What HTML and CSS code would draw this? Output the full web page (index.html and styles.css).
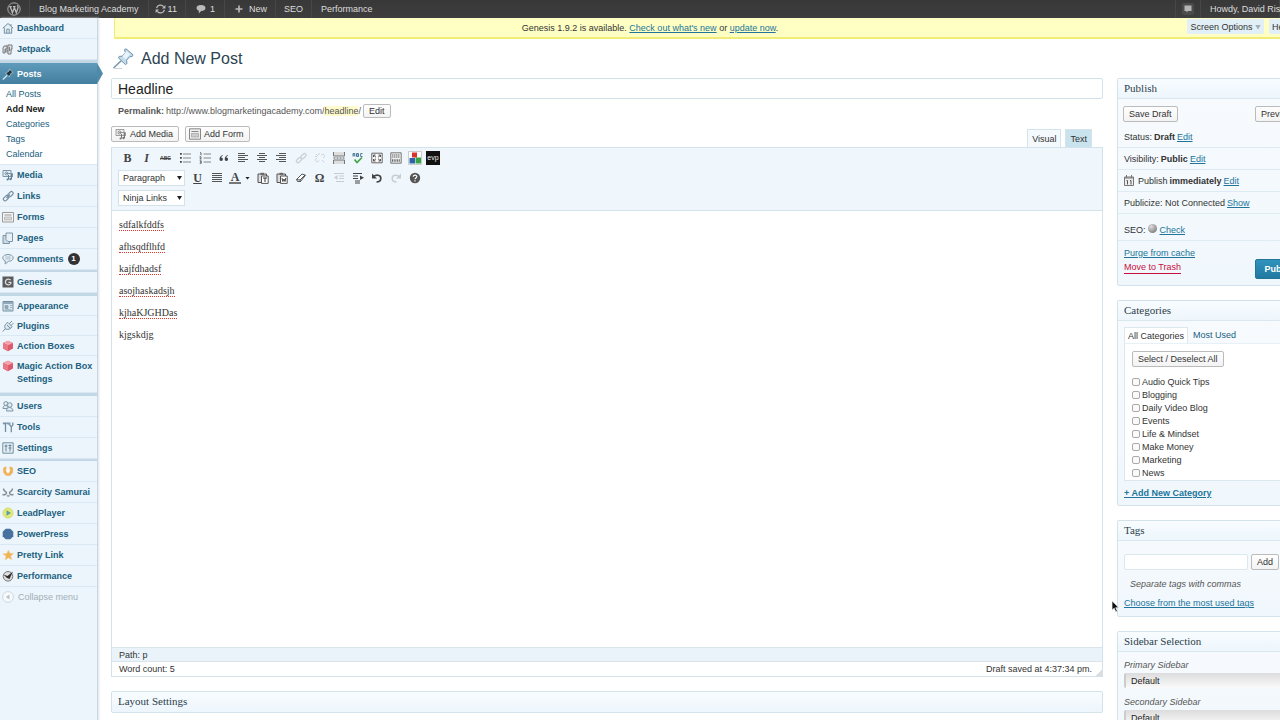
FILE: index.html
```html
<!DOCTYPE html>
<html lang="en">
<head>
<meta charset="utf-8">
<title>Add New Post - Blog Marketing Academy</title>
<link rel="stylesheet" href="styles.css">
</head>
<body>
<header class="adminbar">
  <nav class="adminbar-left" aria-label="Toolbar">
    <a class="ab-item ab-logo" href="#" aria-label="About WordPress"><svg width="14" height="14" viewBox="0 0 14 14"><circle cx="7" cy="7" r="6.2" fill="none" stroke="#aaa" stroke-width="1"/><path d="M2.2 4.6h2.6M3.2 4.6l2.2 6.2L7 6.4M6 4.6h2.6M7 4.6l2.3 6.2 1.8-5.2c.2-.9-.3-1.6-.9-2.3" fill="none" stroke="#bbb" stroke-width="1.3"/></svg></a>
    <a class="ab-item ab-site" href="#">Blog Marketing Academy</a>
    <a class="ab-item ab-updates" href="#"><svg width="11" height="10" viewBox="0 0 11 10"><path d="M1.6 4.2A3.9 3.9 0 0 1 8.6 2.7M9.4 5.8a3.9 3.9 0 0 1-7 1.5" fill="none" stroke="#bbb" stroke-width="1.3"/><path d="M10.4 1v3.4H7zM.6 9V5.600H4z" fill="#bbb"/></svg>11</a>
    <a class="ab-item ab-comments" href="#"><svg width="10" height="10" viewBox="0 0 10 10"><path d="M5 1c2.600 0 4.500 1.200 4.500 3S7.600 7 5.200 7L2.800 9.400V6.700C1.300 6.200.5 5.200.5 4 .5 2.200 2.400 1 5 1z" fill="#bbb"/></svg>1</a>
    <a class="ab-item ab-new" href="#"><svg width="8" height="8" viewBox="0 0 8 8"><path d="M4 .5v7M.5 4h7" stroke="#bbb" stroke-width="1.600"/></svg>New</a>
    <a class="ab-item ab-seo" href="#">SEO</a>
    <a class="ab-item ab-perf" href="#">Performance</a>
  </nav>
  <div class="adminbar-right">
    <a class="ab-item ab-note" href="#" aria-label="Notifications"><svg width="12" height="12" viewBox="0 0 12 12"><rect width="12" height="12" rx="2" fill="#4b4b4b"/><path d="M2.500 2.500h7v5.500H6L4.500 9.500V8h-2z" fill="#b5b5b5"/></svg></a>
    <a class="ab-item ab-user" href="#">Howdy, David Risley</a>
  </div>
</header>

<div class="shell">
  <nav class="menu" aria-label="Main menu">
    <ul class="menu-group">
      <li><a class="menu-item" href="#"><svg class="mi" viewBox="0 0 12 12"><path d="M.8 6.200 6 1.500l5.200 4.700M2.300 5.500v5.700h7.400V5.500M4.800 11V7.200h2.400V11M9 2v2" fill="#e6eef4" stroke="#7290a3"/></svg>Dashboard</a></li>
      <li><a class="menu-item" href="#"><svg class="mi" viewBox="0 0 12 12"><circle cx="6" cy="6" r="4.500" fill="#ccc"/><path d="M2 3h3v3H3v4H1V5zM6 2h4v4H9v5H6zM7.500 4v4M3 8h3" fill="#e2e2e2" stroke="#6d7378" stroke-width=".9"/></svg>Jetpack</a></li>
    </ul>
    <ul class="menu-group">
      <li><a class="menu-item current" href="#"><svg class="mi" viewBox="0 0 12 12"><path d="M7.500 1 11 4.500 9.500 5 7.800 7.500 7.500 9 3.500 5l1.300-.4L7 3z" fill="#22343f" stroke="#dbe9f2" stroke-width=".6"/><path d="M5 7.500.8 11.500" stroke="#dbe9f2" stroke-width="1.200"/></svg>Posts</a>
        <ul class="submenu">
          <li><a href="#">All Posts</a></li>
          <li><a href="#" class="here">Add New</a></li>
          <li><a href="#">Categories</a></li>
          <li><a href="#">Tags</a></li>
          <li><a href="#">Calendar</a></li>
        </ul></li>
      <li><a class="menu-item" href="#"><svg class="mi" viewBox="0 0 12 12"><path d="M1 1.500h8v6H1zM4 4.500h6.500V8" fill="#e4ecf2" stroke="#7b97a9"/><circle cx="4.500" cy="4.500" r="1.500" fill="none" stroke="#7b97a9"/><path d="M9.500 5v5M6.500 6v4.500" stroke="#5f7f94"/><circle cx="8.500" cy="10" r="1.200" fill="#5f7f94"/><circle cx="5.500" cy="10.500" r="1" fill="#5f7f94"/></svg>Media</a></li>
      <li><a class="menu-item" href="#"><svg class="mi" viewBox="0 0 12 12"><g fill="none" stroke="#7590a2" stroke-width="1.200"><rect x="5.500" y="2.500" width="6" height="3.400" rx="1.700" transform="rotate(-45 8.500 4.200)"/><rect x="1" y="6.500" width="6" height="3.400" rx="1.700" transform="rotate(-45 4 8.200)"/><path d="M4.500 8 8 4.500"/></g></svg>Links</a></li>
      <li><a class="menu-item" href="#"><svg class="mi" viewBox="0 0 12 12"><path d="M.5 1.500h11v9.500H.5z" fill="#f4f4f4" stroke="#9b9b9b"/><path d="M2.500 4h7" stroke="#999"/><path d="M2.500 6h7v3h-7z" fill="#d5d5d5" stroke="#aaa" stroke-width=".6"/></svg>Forms</a></li>
      <li><a class="menu-item" href="#"><svg class="mi" viewBox="0 0 12 12"><path d="M1 3.500h6.500v8H1z" fill="#c9d8e3" stroke="#7b97a9"/><path d="M4 1h6.500v8.500H6L4 7.500z" fill="#e8f0f6" stroke="#7b97a9"/></svg>Pages</a></li>
      <li><a class="menu-item" href="#"><svg class="mi" viewBox="0 0 12 12"><path d="M6 1.500c3 0 5.200 1.400 5.200 3.400S9 8.300 6.500 8.300L3.200 11V7.800C1.600 7.200.8 6.200.8 4.900c0-2 2.200-3.400 5.200-3.400z" fill="#e4edf3" stroke="#7b97a9"/><path d="M3.500 4h5M3.500 5.800h5" stroke="#9db3c1" stroke-width=".8"/></svg>Comments <span class="count">1</span></a></li>
    </ul>
    <ul class="menu-group thin">
      <li><a class="menu-item" href="#"><svg class="mi" viewBox="0 0 12 12"><path d="M.5.500h11v11H.5z" fill="#5b5b5b"/><path d="M8.600 4.200A2.900 2.900 0 1 0 8.800 7.500V6.300H6.400" fill="none" stroke="#ddd" stroke-width="1.300"/></svg>Genesis</a></li>
    </ul>
    <ul class="menu-group dense">
      <li><a class="menu-item" href="#"><svg class="mi" viewBox="0 0 12 12"><path d="M1 1.500h10v9.500H1z" fill="#dbe6ee" stroke="#718fa3"/><path d="M1.500 3h9" stroke="#718fa3" stroke-width="1.400"/><path d="M3 5.500h3v3H3zM8 5.500h2M8 7.500h2M3 9.700h6" fill="#8ba6b7" stroke="#8ba6b7" stroke-width=".8"/></svg>Appearance</a></li>
      <li><a class="menu-item" href="#"><svg class="mi" viewBox="0 0 12 12"><path d="M3 8.500C2 5.500 4 3 6 2.500l4 4C9 9 6 10 3.500 9M7.500 3.500 10 1M9 5.500 11.500 3M3.500 8.500.8 11.500M5 5l3 3" fill="#dfe8ee" stroke="#718fa3"/></svg>Plugins</a></li>
      <li><a class="menu-item" href="#"><svg class="mi" viewBox="0 0 12 12"><path d="m6 .8 5 2.200v5.500L6 11.200 1 8.500V3z" fill="#dd5a6d"/><path d="M6 .8 11 3 6 5.300 1 3z" fill="#f3a4ae"/><path d="M6 5.300v5.900L1 8.500V3z" fill="#e77886"/></svg>Action Boxes</a></li>
      <li><a class="menu-item tall" href="#"><svg class="mi" viewBox="0 0 12 12"><path d="m6 .8 5 2.200v5.500L6 11.200 1 8.500V3z" fill="#dd5a6d"/><path d="M6 .8 11 3 6 5.300 1 3z" fill="#f3a4ae"/><path d="M6 5.300v5.900L1 8.500V3z" fill="#e77886"/></svg><span>Magic Action Box Settings</span></a></li>
    </ul>
    <ul class="menu-group">
      <li><a class="menu-item" href="#"><svg class="mi" viewBox="0 0 12 12"><g fill="#e2ebf1" stroke="#7b97a9"><path d="M1 8.500c0-2 1-3 2.500-3S6 6.500 6 8.500z"/><circle cx="3.800" cy="3.500" r="2"/><path d="M4.500 11c0-2.500 1.200-3.500 3-3.500s3.500 1 3.500 3.500z"/><circle cx="7.800" cy="5" r="2.300"/></g></svg>Users</a></li>
      <li><a class="menu-item" href="#"><svg class="mi" viewBox="0 0 12 12"><path d="M.8 2.200h5.400v1.500M3.500 2.500v8.500M2 2v1.500M9.300 11.200V6M7.800 1.500v2.800l1.500 1.400 1.500-1.400V1.500" fill="none" stroke="#718fa3" stroke-width="1.300"/></svg>Tools</a></li>
      <li><a class="menu-item" href="#"><svg class="mi" viewBox="0 0 12 12"><path d="M.8.800h10.400v10.400H.8z" fill="#e8eff4" stroke="#718fa3"/><path d="M4 2.500v7M8 2.500v7M2.500 4h3M6.500 3.500h3M6.500 6h3" stroke="#64859a"/></svg>Settings</a></li>
    </ul>
    <ul class="menu-group thin">
      <li><a class="menu-item" href="#"><svg class="mi" viewBox="0 0 12 12"><path d="M5 3.500 3.500 1.200 1.200 3v4.500L4 10.800h4.200L11 7.500V3L8.500 1.200 7 3.500v2L6 7 5 5.500z" fill="#f0b45c"/><path d="M4.800 3.800v2L6 7.500l1.200-1.700v-2" fill="none" stroke="#fff" stroke-width="1.300"/></svg>SEO</a></li>
      <li><a class="menu-item" href="#"><svg class="mi" viewBox="0 0 12 12"><path d="M1.500 2.500c0 3 3 2.500 3 4.500 0 1.500-2 2-4 1.500M10.500 2.500c0 3-3 2.500-3 4.500 0 1.500 2 2 4 1.500M5 9.500c1 .8 1.500.8 2.500 0" fill="none" stroke="#868d94" stroke-width="1.500"/></svg>Scarcity Samurai</a></li>
      <li><a class="menu-item" href="#"><svg class="mi" viewBox="0 0 12 12"><circle cx="6" cy="6" r="5" fill="#e3ea74" stroke="#d4dc70"/><path d="M4.500 3.300 9 6 4.500 8.700z" fill="#5a9bb0"/></svg>LeadPlayer</a></li>
      <li><a class="menu-item" href="#"><svg class="mi" viewBox="0 0 12 12"><path d="M3.700.7h4.600l3 3v4.600l-3 3H3.700l-3-3V3.700z" fill="#47729f"/></svg>PowerPress</a></li>
      <li><a class="menu-item" href="#"><svg class="mi" viewBox="0 0 12 12"><path d="m6.500 1 1.300 3.200 3.700.3-2.800 2.400 1.100 3.900-3.300-2L3 11l1-3.900L.8 5l4-.6z" fill="#efb353" stroke="#f4cf8f" stroke-width=".6"/></svg>Pretty Link</a></li>
      <li><a class="menu-item" href="#"><svg class="mi" viewBox="0 0 12 12"><circle cx="6" cy="6.300" r="4.800" fill="#dedede" stroke="#777"/><path d="M1.500 4.500 5.500 6 11 1.500 7.500 9 5 8z" fill="#2f2f2f"/></svg>Performance</a></li>
      <li><button class="collapse" type="button"><svg class="mi" viewBox="0 0 12 12"><circle cx="6" cy="6" r="5.400" fill="#f7fafc" stroke="#cdd8df"/><path d="M7.500 3.500v5L3.800 6z" fill="#b7c2ca"/></svg>Collapse menu</button></li>
    </ul>
  </nav>

  <div class="content">
    <div class="topstrip">
      <p class="notice">Genesis 1.9.2 is available. <a href="#">Check out what's new</a> or <a href="#">update now</a>.</p>
      <div class="screen-links">
        <button type="button">Screen Options <i class="tri"></i></button>
        <button type="button">Help <i class="tri"></i></button>
      </div>
    </div>

    <h1 class="page-title"><svg width="23" height="23" viewBox="0 0 23 23"><path d="M12.500 2.500 14 1.800l7 6-.8 1.700-2.400.2-3.200 3.500.4 3.300-1.600 1L6.500 11l.7-1.600 3.200-.2 3-3.600z" fill="#c3dcec" stroke="#6f94ac"/><path d="m14.500 4-4 5.500 3 2.800 4.500-5z" fill="#eaf4fa"/><path d="M9.200 13.800 1.500 21" stroke="#7696ab" stroke-width="1.500"/><path d="M2 21.500h8" stroke="#c9d3d9"/></svg>Add New Post</h1>

    <div class="columns">
      <main class="primary">
        <input class="title-input" type="text" value="Headline" aria-label="Post title">
        <div class="permalink"><strong>Permalink:</strong> <span>http://www.blogmarketingacademy.com/<mark>headline</mark>/</span> <button class="btn" type="button">Edit</button></div>

        <div class="editor-top">
          <button class="btn media-btn" type="button"><svg width="12" height="12" viewBox="0 0 12 12"><path d="M1 1.500h8v6H1zM4 4.500h6.500V8" fill="#eee" stroke="#888" stroke-width=".8"/><circle cx="4.500" cy="4.500" r="1.500" fill="none" stroke="#888"/><path d="M9.500 5v5M6.500 6v4.500" stroke="#777"/><circle cx="8.500" cy="10" r="1.200" fill="#777"/><circle cx="5.500" cy="10.500" r="1" fill="#777"/></svg>Add Media</button>
          <button class="btn media-btn" type="button"><svg width="12" height="12" viewBox="0 0 12 12"><path d="M.5.800h11v10.400H.5z" fill="#eee" stroke="#888"/><path d="M2.500 3.500h7" stroke="#888"/><path d="M2.500 5.500h7v3.500h-7z" fill="#ccc" stroke="#999" stroke-width=".6"/></svg>Add Form</button>
          <div class="editor-tabs"><button class="etab on" type="button">Visual</button><button class="etab" type="button">Text</button></div>
        </div>

        <section class="editor" aria-label="Editor">
          <div class="toolbar">
            <div class="trow icons">
              <div class="tgroup">
                <button type="button" class="tb glyph" aria-label="Bold"><b>B</b></button>
                <button type="button" class="tb glyph" aria-label="Italic"><b><em>I</em></b></button>
                <button type="button" class="tb abc" aria-label="Strikethrough"><s>ABC</s></button>
                <button type="button" class="tb" aria-label="Bulleted list"><svg viewBox="0 0 12 12"><path d="M4 2h8M4 6h8M4 10h8" stroke="#888"/><path d="M1 1h1.800v1.800H1zM1 5h1.800v1.800H1zM1 9h1.800v1.800H1z" fill="#444"/></svg></button>
              </div>
              <div class="tgroup">
                <button type="button" class="tb" aria-label="Numbered list"><svg viewBox="0 0 12 12"><path d="M4.500 2H12M4.500 6H12M4.500 10H12" stroke="#888"/><path d="M1 .8h1v2.500M.5 4.800h1.500v1L.8 7H2.500M.7 8.800h1.500v2.500H.7M1 10h1" stroke="#444" fill="none" stroke-width=".8"/></svg></button>
                <button type="button" class="tb" aria-label="Blockquote"><svg viewBox="0 0 12 12"><path d="M4.800 3C3 3.500 1.500 5 1.500 7.200a1.700 1.700 0 1 0 1.700-1.600C3.300 4.800 4 4 5 3.600zM10 3C8.200 3.500 6.700 5 6.700 7.200a1.700 1.700 0 1 0 1.700-1.600c.1-.8.8-1.600 1.800-2z" fill="#444"/></svg></button>
                <button type="button" class="tb" aria-label="Align left"><svg viewBox="0 0 12 12"><path d="M1 1.500h7M1 3.500h10M1 5.500h7M1 7.500h10M1 9.500h7" stroke="#555"/></svg></button>
                <button type="button" class="tb" aria-label="Align center"><svg viewBox="0 0 12 12"><path d="M3 1.500h6M1 3.500h10M3 5.500h6M1 7.500h10M3 9.500h6" stroke="#555"/></svg></button>
                <button type="button" class="tb" aria-label="Align right"><svg viewBox="0 0 12 12"><path d="M4 1.500h7M1 3.500h10M4 5.500h7M1 7.500h10M4 9.500h7" stroke="#555"/></svg></button>
              </div>
              <div class="tgroup">
                <button type="button" class="tb off" aria-label="Link"><svg viewBox="0 0 12 12"><g fill="none" stroke="#666" stroke-width="1.200"><rect x="5.500" y="2.500" width="6" height="3.200" rx="1.600" transform="rotate(-45 8.500 4.100)"/><rect x="1" y="6.500" width="6" height="3.200" rx="1.600" transform="rotate(-45 4 8.100)"/></g></svg></button>
                <button type="button" class="tb off" aria-label="Unlink"><svg viewBox="0 0 12 12"><path d="M7 3.500C8 1.500 11 2 10.500 4.500L9 6M5 8.500C4 10.500 1 10 1.500 7.500L3 6M2 2l2 2M8 8l2.500 2.500M5 1v2M1 4.500h2" fill="none" stroke="#666"/></svg></button>
                <button type="button" class="tb" aria-label="Insert More tag"><svg viewBox="0 0 12 12"><path d="M.5 0v4h11V0M.5 12V8h11v4" fill="#ddd" stroke="#777"/><path d="M.5 6H12" stroke="#555" stroke-dasharray="2 1"/></svg></button>
                <button type="button" class="tb" aria-label="Spellcheck"><svg viewBox="0 0 12 12"><path d="M1 4.500v-3h1.800v3M1 3h1.800M4.500 1.500v3h2v-3zM4.500 3h2M10.500 1.500H8.700v3h1.800" fill="none" stroke="#3f7192" stroke-width=".9"/><path d="M2.500 7.500 5 10.500l5-5" fill="none" stroke="#43a548" stroke-width="1.700"/></svg></button>
                <button type="button" class="tb" aria-label="Fullscreen"><svg viewBox="0 0 12 12"><path d="M.8 1.200h10.400v9.600H.8z" fill="#fafafa" stroke="#666"/><path d="M2.500 5V3h2M7.500 3h2v2M9.500 7v2h-2M4.500 9h-2V7M3 3.500l2 1.800M9 3.500 7 5.300M3 8.500l2-1.800M9 8.500 7 6.700" fill="none" stroke="#555"/></svg></button>
                <button type="button" class="tb" aria-label="Kitchen sink"><svg viewBox="0 0 12 12"><path d="M.8.800h10.400v10.400H.8z" fill="#eee" stroke="#777"/><path d="M2 3h8M2 5h8" stroke="#666" stroke-dasharray="1.500 .5"/><path d="M2 8.500h8" stroke="#666" stroke-width="2.500" stroke-dasharray="1 .7"/></svg></button>
                <button type="button" class="tb" aria-label="Insert blocks"><svg class="wide" viewBox="0 0 14 14"><path d="M.5.500h13v13H.5z" fill="#fff" stroke="#ccc"/><path d="M4 1.500h5v5H4z" fill="#d8342c"/><path d="M1.500 7H7v5.500H1.500z" fill="#2d63ad"/><path d="M7.500 6.500H13v6H7.500z" fill="#37a246"/></svg></button>
                <button type="button" class="tb evp" aria-label="Insert video">evp</button>
              </div>
            </div>
            <div class="trow">
              <label class="mce-select"><select aria-label="Format"><option>Paragraph</option></select></label>
              <div class="tgroup">
                <button type="button" class="tb glyph" aria-label="Underline"><b><u>U</u></b></button>
                <button type="button" class="tb" aria-label="Justify"><svg viewBox="0 0 12 12"><path d="M1 1.500h10M1 3.500h10M1 5.500h10M1 7.500h10M1 9.500h10" stroke="#555"/></svg></button>
                <button type="button" class="tb color" aria-label="Text color"><span class="glyph">A</span><i class="tri dark"></i></button>
                <button type="button" class="tb" aria-label="Paste as text"><svg viewBox="0 0 12 12"><path d="M1 2h8.500v8.500H1z" fill="#ddd" stroke="#555"/><path d="M3.500.800h3.500v2H3.500z" fill="#666"/><path d="M4.500 4h6.700v7.400H4.500z" fill="#fff" stroke="#555"/><path d="M6 6h4M8 6v4" stroke="#333"/></svg></button>
                <button type="button" class="tb" aria-label="Paste from Word"><svg viewBox="0 0 12 12"><path d="M1 2h8.500v8.500H1z" fill="#ddd" stroke="#555"/><path d="M3.500.800h3.500v2H3.500z" fill="#666"/><path d="M4.500 4h6.700v7.400H4.500z" fill="#fff" stroke="#555"/><path d="m6 6 .8 3.500L8 7l1 2.500L9.800 6" stroke="#333" fill="none" stroke-width=".9"/></svg></button>
                <button type="button" class="tb" aria-label="Remove formatting"><svg viewBox="0 0 12 12"><path d="M1.500 7.500 7 2l3.500 1.200L5.500 9.500H2.500z" fill="#fff" stroke="#555"/><path d="M1.500 7.500 5 8l.5 1.800M5 8l5-5" fill="none" stroke="#555"/></svg></button>
                <button type="button" class="tb glyph" aria-label="Special character"><b>Ω</b></button>
                <button type="button" class="tb off" aria-label="Outdent"><svg viewBox="0 0 12 12"><path d="M1 1.500h10M6 4h5M6 6.500h5M3 9.500h8" stroke="#555"/><path d="M4.500 3v5L1 5.500z" fill="#555"/></svg></button>
                <button type="button" class="tb" aria-label="Indent"><svg viewBox="0 0 12 12"><path d="M1 1.500h9M1 4h5M1 6.500h5M3 9h5M3 11h5" stroke="#444" stroke-width="1.200"/><path d="M8 3.500v4.500l4-2.200z" fill="#444"/></svg></button>
                <button type="button" class="tb" aria-label="Undo"><svg viewBox="0 0 12 12"><path d="M2.500 4.500C5 2.500 10 2.500 9.800 6.500 9.700 8.500 8 10 5.500 10" fill="none" stroke="#444" stroke-width="1.700"/><path d="M1 1.500v5h5z" fill="#444"/></svg></button>
                <button type="button" class="tb off" aria-label="Redo"><svg viewBox="0 0 12 12"><path d="M9.500 4.500C7 2.500 2 2.500 2.200 6.500 2.300 8.500 4 10 6.500 10" fill="none" stroke="#555" stroke-width="1.500"/><path d="M11 1.500v5H6z" fill="#555"/></svg></button>
                <button type="button" class="tb" aria-label="Help"><svg viewBox="0 0 12 12"><circle cx="6" cy="6" r="5.200" fill="#555"/><path d="M4.300 4.800C4.300 2.500 8 2.800 7.800 4.800 7.700 6 6 6 6 7.300M6 8.300v1.300" fill="none" stroke="#fff" stroke-width="1.200"/></svg></button>
              </div>
            </div>
            <div class="trow">
              <label class="mce-select"><select aria-label="Ninja Links"><option>Ninja Links</option></select></label>
            </div>
          </div>
          <div class="edit-area" role="textbox" aria-label="Post content" contenteditable="true" spellcheck="false">
            <p><span class="miss">sdfalkfddfs</span></p>
            <p><span class="miss">afhsqdflhfd</span></p>
            <p><span class="miss">kajfdhadsf</span></p>
            <p><span class="miss">asojhaskadsjh</span></p>
            <p><span class="miss">kjhaKJGHDas</span></p>
            <p>kjgskdjg</p>
          </div>
          <div class="path">Path: p</div>
          <div class="status"><span>Word count: 5</span><span>Draft saved at 4:37:34 pm.</span></div>
        </section>

        <section class="box"><h2>Layout Settings</h2></section>
      </main>

      <aside class="side">
        <section class="box">
          <h2>Publish</h2>
          <div class="pub-actions"><button class="btn" type="button">Save Draft</button><button class="btn" type="button">Preview</button></div>
          <div class="pub-row first">Status: <b>Draft</b> <a href="#">Edit</a></div>
          <div class="pub-row">Visibility: <b>Public</b> <a href="#">Edit</a></div>
          <div class="pub-row"><svg width="10" height="11" viewBox="0 0 10 11"><path d="M.5 2h9v8.500h-9z" fill="#eee" stroke="#777"/><path d="M.5 3h9M2.500 0v3M7.500 0v3" stroke="#777"/><path d="M2.500 5.500h1v4M6 5.500h1v4" fill="none" stroke="#555"/></svg> Publish <b>immediately</b> <a href="#">Edit</a></div>
          <div class="pub-row">Publicize: Not Connected <a href="#">Show</a></div>
          <div class="pub-row seo-row">SEO: <i class="ball"></i> <a href="#">Check</a></div>
          <div class="pub-foot">
            <div><a href="#">Purge from cache</a><a class="trash" href="#">Move to Trash</a></div>
            <button class="btn primary-btn" type="button">Publish</button>
          </div>
        </section>

        <section class="box">
          <h2>Categories</h2>
          <div class="cat-body">
            <div class="cat-tabs"><button class="on" type="button">All Categories</button><button type="button">Most Used</button></div>
            <div class="cat-panel">
              <button class="btn" type="button">Select / Deselect All</button>
              <div class="cat-list">
                <label><input type="checkbox">Audio Quick Tips</label>
                <label><input type="checkbox">Blogging</label>
                <label><input type="checkbox">Daily Video Blog</label>
                <label><input type="checkbox">Events</label>
                <label><input type="checkbox">Life &amp; Mindset</label>
                <label><input type="checkbox">Make Money</label>
                <label><input type="checkbox">Marketing</label>
                <label><input type="checkbox">News</label>
              </div>
            </div>
            <a class="add-cat" href="#">+ Add New Category</a>
          </div>
        </section>

        <section class="box">
          <h2>Tags</h2>
          <div class="tag-body">
            <div class="tag-row"><input type="text" aria-label="Add tags"><button class="btn" type="button">Add</button></div>
            <p class="hint">Separate tags with commas</p>
            <a href="#">Choose from the most used tags</a>
          </div>
        </section>

        <section class="box">
          <h2>Sidebar Selection</h2>
          <div class="sel-body">
            <label for="side-a">Primary Sidebar</label>
            <select id="side-a"><option>Default</option></select>
            <label for="side-b">Secondary Sidebar</label>
            <select id="side-b"><option>Default</option></select>
          </div>
        </section>
      </aside>
    </div>
  </div>
</div>
<svg class="cursor" width="9" height="13" viewBox="0 0 9 13"><path d="M1 .8v9.400l2.200-2 1.600 3.700 1.600-.7-1.600-3.500h3z" fill="#111" stroke="#fff" stroke-width=".7"/></svg>
</body>
</html>
```
FILE: styles.css
```css
* { box-sizing: border-box; }
html { overflow-x: hidden; scrollbar-width: none; }
body {
  margin: 0;
  overflow-x: clip;
  font: 9px/12px "Liberation Sans", Arial, sans-serif;
  color: #333;
  background: #fff;
}
ul, p, h1, h2 { margin: 0; padding: 0; list-style: none; }
a { color: #21759b; }
button, input, select { font: inherit; color: inherit; margin: 0; }
button { cursor: pointer; }
svg { display: block; flex: none; }

/* Top bar */
.adminbar {
  display: flex;
  justify-content: space-between;
  height: 18px;
  background: linear-gradient(#383838, #3e3e3e);
  overflow: hidden;
}
.adminbar-left, .adminbar-right { display: flex; }
.ab-item {
  display: flex;
  align-items: center;
  gap: 3px;
  padding: 0 9px;
  color: #ddd;
  text-decoration: none;
  white-space: nowrap;
  border-right: 1px solid #474747;
}
.ab-logo { padding: 0 8px 0 7px; }
.ab-updates { padding: 0 8px 0 6px; gap: 2px; }
.ab-comments { padding: 0 9px 0 10px; gap: 4px; }
.ab-new { padding: 0 8px 0 10px; gap: 6px; }
.ab-seo { padding: 0 8px; }
.ab-perf { border-right: 0; }
.ab-note { padding: 0 6px; border-left: 1px solid #474747; }
.ab-user { width: 79px; }

/* Page frame */
.shell { display: flex; min-height: calc(100vh - 18px); }
.menu {
  flex: 0 0 98px;
  background: #ecf5fc;
  border-right: 1px solid #c9d9e3;
  box-shadow: 1px 0 2px #dde4e9;
}
.menu-group + .menu-group { border-top: 3px solid #c3d8e5; }
.menu-group + .thin { border-top-width: 2px; }
.menu-item {
  display: flex;
  align-items: center;
  gap: 3px;
  height: 21px;
  padding-left: 2px;
  font-weight: bold;
  color: #21607f;
  text-decoration: none;
  border-bottom: 1px solid #d9e8f2;
}
.dense .menu-item { height: 20px; }
.mi { width: 12px; height: 12px; }
.dense .tall { height: 37px; align-items: flex-start; padding-top: 4px; line-height: 13px; }
.menu-item.current {
  position: relative;
  color: #fff;
  background: linear-gradient(#5f9bbb, #437e9f);
  border-bottom: 0;
}
.current::after {
  content: "";
  position: absolute;
  left: 100%;
  top: 0;
  width: 6px;
  height: 100%;
  background: #4f8aaa;
  clip-path: polygon(0 0, 100% 50%, 0 100%);
}
.submenu { padding: 3px 0 2px; background: #fff; border-bottom: 1px solid #d9e8f2; }
.submenu a {
  display: block;
  padding-left: 6px;
  line-height: 15px;
  text-decoration: none;
  color: #21607f;
}
.submenu .here { font-weight: bold; color: #222; }
.count {
  width: 12px;
  height: 12px;
  margin-left: 1px;
  border-radius: 6px;
  background: #333;
  color: #fff;
  font-size: 8px;
  text-align: center;
}
.collapse {
  display: flex;
  align-items: center;
  gap: 4px;
  height: 20px;
  padding: 0 0 0 2px;
  border: 0;
  background: none;
  color: #a3afb7;
}

.content { flex: 1; min-width: 0; padding-left: 13px; }
.topstrip { position: relative; margin-left: 3px; }
.notice {
  height: 21px;
  padding: 4px 95px 0 0;
  text-align: center;
  background: #ffffc4;
  border: 1px solid #f0ec78;
  border-width: 0 0 2px 1px;
}
.screen-links { position: absolute; top: 1px; right: -22px; display: flex; gap: 5px; }
.screen-links button {
  height: 15px;
  padding: 0 3px;
  border: 0;
  background: #e2eff6;
  border-radius: 0 0 2px 2px;
  line-height: 12px;
  white-space: nowrap;
}
.tri {
  display: inline-block;
  width: 6px;
  height: 5px;
  background: #9db0bb;
  clip-path: polygon(0 0, 100% 0, 50% 100%);
}
.tri.dark { width: 5px; height: 3px; background: #222; }

.page-title {
  display: flex;
  align-items: center;
  gap: 6px;
  height: 39px;
  padding-left: 1px;
  font-size: 16px;
  line-height: 20px;
  font-weight: normal;
  color: #2c4452;
}
.columns { display: flex; align-items: flex-start; gap: 14px; }
.primary { flex: 1; min-width: 0; }
.side { flex: 0 0 240px; margin-right: -77px; }

.btn {
  height: 16px;
  padding: 0 5px;
  border: 1px solid #bbb;
  border-radius: 2px;
  background: linear-gradient(#fefefe, #f3f3f3);
  line-height: 12px;
  white-space: nowrap;
}
.title-input {
  display: block;
  width: 100%;
  height: 21px;
  padding: 0 6px;
  border: 1px solid #d3e2eb;
  border-radius: 2px;
  font-size: 14px;
  color: #222;
}
.permalink { display: flex; align-items: center; gap: 2px; height: 24px; padding-left: 7px; color: #555; }
.permalink .btn { height: 14px; color: #333; }
mark { background: #fffbcc; color: inherit; }
.editor-top { display: flex; gap: 6px; height: 24px; align-items: flex-start; padding-top: 3px; }
.media-btn { display: flex; align-items: center; gap: 3px; padding: 0 5px 0 3px; }
.editor-tabs { display: flex; gap: 4px; margin: 3px 11px 0 auto; }
.etab {
  height: 18px;
  padding: 0 4px;
  border: 1px solid #d5e3ec;
  border-bottom: 0;
  background: #c9e3ee;
}
.etab.on { background: #f4f9fd; }

.editor { border: 1px solid #d3e2eb; }
.toolbar {
  display: flex;
  flex-direction: column;
  gap: 4px;
  padding: 2px 6px 4px;
  background: #eff6fc;
  border-bottom: 1px solid #d3e2eb;
}
.trow { display: flex; align-items: center; gap: 3px; height: 16px; }
.icons { gap: 1px; }
.tgroup { display: flex; align-items: center; }
.tb {
  display: flex;
  align-items: center;
  justify-content: center;
  width: 19px;
  height: 16px;
  padding: 0;
  border: 0;
  background: none;
  color: #444;
}
.tb svg { width: 12px; height: 12px; }
.tb svg.wide { width: 14px; height: 14px; }
.tb.off { opacity: .25; }
.glyph { font-family: "Liberation Serif", "Times New Roman", serif; font-size: 12px; }
.tb.abc { font-size: 5px; font-weight: bold; }
.tb.color { width: 27px; gap: 4px; }
.tb .glyph { width: 12px; line-height: 10px; font-weight: bold; border-bottom: 2px solid #777; }
.tb.evp {
  width: 14px;
  height: 14px;
  margin-left: 2px;
  background: #111;
  color: #eee;
  font-size: 7px;
}
.mce-select { position: relative; width: 67px; height: 16px; }
.mce-select select {
  appearance: none;
  display: block;
  width: 100%;
  height: 16px;
  padding: 0 4px;
  border: 1px solid #d3e2eb;
  border-radius: 0;
  background: #fff;
}
.mce-select::after {
  content: "";
  position: absolute;
  right: 3px;
  top: 6px;
  width: 5px;
  height: 4px;
  background: #222;
  clip-path: polygon(0 0, 100% 0, 50% 100%);
}
.edit-area {
  min-height: 436px;
  padding: 7px;
  font: 10px/13px "Liberation Serif", Georgia, serif;
  color: #333;
  outline: 0;
}
.edit-area p { margin-bottom: 9px; }
.miss { border-bottom: 1px dotted #e0342c; }
.path { height: 15px; padding: 1px 7px; background: #eaf3fa; border: 1px solid #d8e5ed; border-width: 1px 0; }
.status {
  display: flex;
  justify-content: space-between;
  height: 14px;
  padding: 1px 10px 0 7px;
  background: linear-gradient(135deg, transparent 50%, #ddd 50%) right bottom / 7px 7px no-repeat;
}

/* Panels */
.box { margin-bottom: 14px; border: 1px solid #d3e2eb; border-radius: 2px; background: linear-gradient(#f8fbfe, #f0f7fc); }
.editor + .box { margin-top: 14px; }
.box h2 {
  height: 20px;
  padding: 3px 6px;
  font: 11px/13px "Liberation Serif", Georgia, serif;
  color: #2c3e4a;
  background: linear-gradient(#f8fcff, #edf6fc);
}
.side h2 { border-bottom: 1px solid #d9e7ef; }
.pub-actions { display: flex; justify-content: space-between; padding: 7px 57px 5px 5px; }
.pub-row { display: flex; align-items: center; gap: 2px; height: 22px; padding-left: 6px; border-bottom: 1px solid #dfebf2; white-space: nowrap; }
.pub-row.first { height: 21px; }
.pub-row svg { margin-right: 2px; }
.seo-row { height: 27px; padding-top: 6px; }
.ball { width: 9px; height: 9px; margin: 0 1px 4px 0; border-radius: 50%; background: radial-gradient(circle at 35% 30%, #ddd, #666); }
.pub-foot { display: flex; justify-content: space-between; align-items: flex-end; padding: 6px 50px 6px 6px; }
.pub-foot a { display: block; margin-bottom: 2px; }
.pub-foot .trash { width: 57px; margin-bottom: 5px; line-height: 12px; color: #c8103c; text-decoration: none; border-bottom: 1px solid #c8103c; white-space: nowrap; }
.primary-btn { height: 20px; padding: 0 8px; color: #fff; font-weight: bold; border-color: #21759b; background: linear-gradient(#2f93bd, #22789f); }

.cat-body { padding: 6px; }
.cat-tabs { display: flex; height: 16px; }
.cat-tabs button { padding: 0 5px; border: 0; background: none; color: #21607f; }
.cat-tabs .on { padding: 0 3px; color: #333; background: #fff; border: 1px solid #dbe8f0; border-bottom: 0; }
.cat-panel { padding: 7px; height: 138px; background: #fff; border: 1px solid #dbe8f0; border-top-color: #e6f0f6; overflow: hidden; }
.cat-list { margin-top: 8px; }
.cat-list label { display: flex; align-items: center; gap: 2px; height: 13px; }
.cat-list input { appearance: none; width: 8px; height: 8px; border: 1px solid #a9a9a9; border-radius: 2px; background: #fafafa; }
.add-cat { display: inline-block; margin-top: 6px; font-weight: bold; }

.tag-body { padding: 13px 6px 7px; }
.tag-row { display: flex; gap: 3px; }
.tag-row input { width: 124px; height: 16px; border: 1px solid #dbe8f0; border-radius: 2px; background: #fff; }
.hint { margin: 8px 6px 7px; font-style: italic; color: #555; }

.sel-body { padding: 7px 6px 8px; }
.sel-body label { display: block; font-style: italic; color: #555; }
.sel-body select {
  appearance: none;
  display: block;
  width: 100%;
  height: 15px;
  margin: 2px 0 8px;
  padding: 0 5px;
  border: 0;
  border-left: 2px solid #ccc;
  border-radius: 2px;
  background: linear-gradient(#dcdcdc, #fafafa);
  color: #222;
}
.cursor { position: absolute; left: 1111px; top: 600px; }
```
